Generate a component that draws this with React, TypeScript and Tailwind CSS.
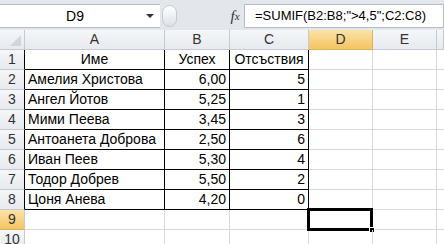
const rows = [
  { name: "Име", grade: "Успех", abs: "Отсъствия", head: true },
  { name: "Амелия Христова", grade: "6,00", abs: "5" },
  { name: "Ангел Йотов", grade: "5,25", abs: "1" },
  { name: "Мими Пеева", grade: "3,45", abs: "3" },
  { name: "Антоанета Доброва", grade: "2,50", abs: "6" },
  { name: "Иван Пеев", grade: "5,30", abs: "4" },
  { name: "Тодор Добрев", grade: "5,50", abs: "2" },
  { name: "Цоня Анева", grade: "4,20", abs: "0" },
]

const cols = ["A", "B", "C", "D", "E", ""]
const grid = "grid grid-cols-[25px_140px_65px_79px_64px_64px_1fr]"

function RowHead({ n, active, dark }: { n: number; active?: boolean; dark?: boolean }) {
  return (
    <div
      className={
        "h-5 flex items-center justify-center border-b border-r text-[14px] text-[#333] " +
        (active
          ? "bg-gradient-to-b from-[#fbe3a9] to-[#f4c45f] border-b-[#d9b25a] "
          : "bg-gradient-to-b from-[#f5f6f8] to-[#e7eaee] border-b-[#c5cad1] ") +
        (dark ? "border-r-black" : "border-r-[#c5cad1]")
      }
    >
      {n}
    </div>
  )
}

export default function App() {
  return (
    <div className="w-[444px] h-[244px] overflow-hidden bg-white font-['Liberation_Sans',sans-serif]">
      {/* formula bar */}
      <div className="h-[30px] bg-[#e3e7ec] pt-[4px] flex">
        <div className="w-[160px] h-[24px] bg-white border-y border-[#b7bdc6] flex items-center">
          <span className="flex-1 text-center text-[14px] text-black pl-[4px]">D9</span>
          <span className="w-0 h-0 border-x-[4px] border-x-transparent border-t-[4px] border-t-[#333] mr-[6px]" />
        </div>
        <div className="w-[66px] h-[24px] flex items-center">
          <div className="w-[15px] h-[22px] rounded-full border border-[#c4c9d0] bg-gradient-to-b from-[#ffffff] to-[#dde1e6] ml-[2px]" />
        </div>
        <div className="w-[18px] h-[24px] flex items-center justify-center text-[15px] italic font-['Liberation_Serif',serif] text-[#333]">
          f<span className="text-[11px]">x</span>
        </div>
        <div className="flex-1 h-[24px] bg-white border border-[#b7bdc6] flex items-center pl-[10px] text-[13px] text-black">
          =SUMIF(B2:B8;"&gt;4,5";C2:C8)
        </div>
      </div>

      <div className={grid}>
        {/* corner */}
        <div className="h-5 border-b border-r border-[#c5cad1] bg-gradient-to-b from-[#f5f6f8] to-[#e7eaee] relative">
          <span className="absolute right-[3px] bottom-[3px] w-0 h-0 border-l-[11px] border-l-transparent border-b-[11px] border-b-[#d2d6dc]" />
        </div>
        {cols.map((c, i) => (
          <div
            key={i}
            className={
              "h-5 flex items-center justify-center border-b border-r text-[14px] text-[#333] " +
              (c === "D"
                ? "bg-gradient-to-b from-[#fbe3a9] to-[#f4c45f] border-[#d9b25a]"
                : "bg-gradient-to-b from-[#f5f6f8] to-[#e7eaee] border-[#c5cad1]")
            }
          >
            {c}
          </div>
        ))}

        {rows.map((r, i) => (
          <div key={i} className="contents">
            <RowHead n={i + 1} dark />
            <div className={"h-5 border-b border-r border-black text-[14px] text-black flex items-center " + (r.head ? "justify-center" : "pl-[3px]")}>
              {r.name}
            </div>
            <div className={"h-5 border-b border-r border-black text-[14px] text-black flex items-center " + (r.head ? "justify-center" : "justify-end pr-[3px]")}>
              {r.grade}
            </div>
            <div className={"h-5 border-b border-r border-black text-[14px] text-black flex items-center " + (r.head ? "justify-center" : "justify-end pr-[3px]")}>
              {r.abs}
            </div>
            <div className="h-5 border-b border-r border-[#d9d9d9]" />
            <div className="h-5 border-b border-r border-[#d9d9d9]" />
            <div className="h-5 border-b border-[#d9d9d9]" />
          </div>
        ))}

        {[9, 10].map(n => (
          <div key={n} className="contents">
            <RowHead n={n} active={n === 9} />
            <div className="h-5 border-b border-r border-[#d9d9d9]" />
            <div className="h-5 border-b border-r border-[#d9d9d9]" />
            <div className="h-5 border-b border-r border-[#d9d9d9]" />
            <div className="h-5 border-b border-r border-[#d9d9d9] relative">
              {n === 9 && (
                <div className="absolute -left-[2px] -top-[2px] w-[66px] h-[23px] border-[3px] border-black">
                  <span className="absolute -right-[5px] -bottom-[5px] w-[6px] h-[6px] bg-black border border-white" />
                </div>
              )}
            </div>
            <div className="h-5 border-b border-r border-[#d9d9d9]" />
            <div className="h-5 border-b border-[#d9d9d9]" />
          </div>
        ))}
      </div>
    </div>
  )
}
